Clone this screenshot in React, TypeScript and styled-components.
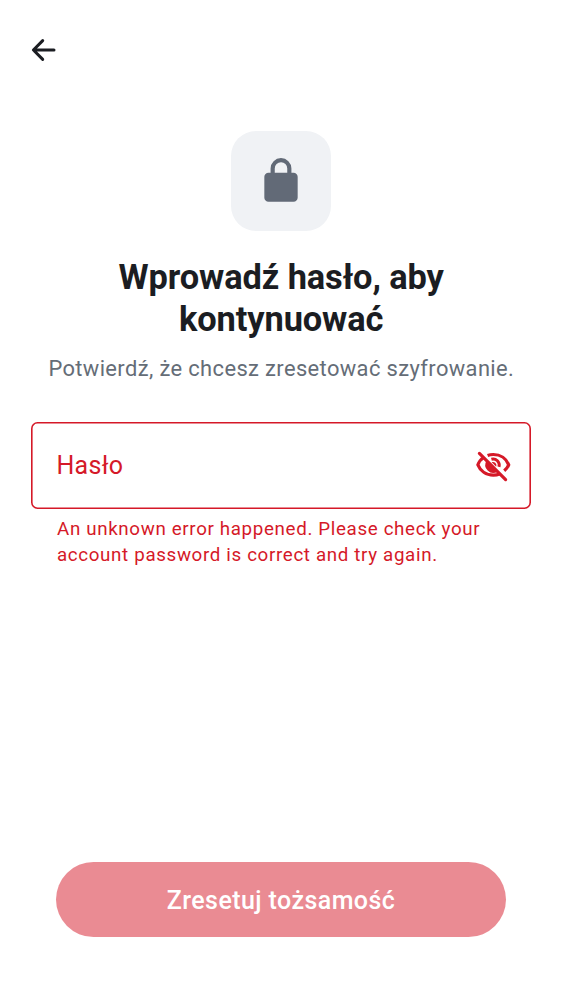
import React from "react";
import styled, { createGlobalStyle } from "styled-components";

const Global = createGlobalStyle`
  * { box-sizing: border-box; }
  body { margin: 0; background: #fff; font-family: Roboto, "Liberation Sans", sans-serif; }
`;

const Screen = styled.main`
  display: flex;
  flex-direction: column;
  height: 1000px;
  width: 562px;
  overflow: hidden;
  background: #fff;
`;

const TopBar = styled.header`
  display: flex;
  align-items: center;
  height: 100px;
  padding-left: 25px;
`;

const IconButton = styled.button`
  display: flex;
  padding: 0;
  border: 0;
  background: none;
  color: inherit;
`;

const Header = styled.section`
  display: flex;
  flex-direction: column;
  align-items: center;
  padding-top: 31px;
`;

const IconTile = styled.div`
  display: flex;
  align-items: center;
  justify-content: center;
  width: 100px;
  height: 100px;
  border-radius: 25px;
  background: #f0f2f5;
`;

const Title = styled.h1`
  margin: 25px 0 0;
  padding-left: 0.4px;
  font-size: 34.4px;
  line-height: 42.2px;
  letter-spacing: -0.1px;
  font-weight: 700;
  color: #1b1d22;
  text-align: center;
`;

const Subtitle = styled.p`
  margin: 13px 0 0;
  padding-left: 0.6px;
  font-size: 21.9px;
  line-height: 31px;
  letter-spacing: 0.38px;
  color: #656d77;
  white-space: nowrap;
`;

const Field = styled.div`
  display: flex;
  align-items: center;
  justify-content: space-between;
  height: 87.5px;
  margin: 37.3px 31px 0;
  padding: 0 19px 0 25.4px;
  box-shadow: inset 0 0 0 1.6px #d51928;
  border-radius: 6.5px;
  color: #d51928;
`;

const Label = styled.span`
  font-size: 25px;
  letter-spacing: 0.3px;
`;

const ErrorText = styled.p`
  margin: 6.8px 57px 0;
  font-size: 18.75px;
  line-height: 26.4px;
  letter-spacing: 0.65px;
  color: #d51928;
  white-space: nowrap;
`;

const Footer = styled.footer`
  margin-top: auto;
  padding: 0 56px 63px;
`;

const SubmitButton = styled.button`
  display: block;
  width: 100%;
  height: 75px;
  padding: 2px 0 0;
  border: 0;
  border-radius: 38px;
  background: #ea8b93;
  color: #fff;
  font-family: inherit;
  font-size: 25px;
  font-weight: 500;
  letter-spacing: 0.42px;
`;

export default function App() {
  return (
    <Screen>
      <Global />
      <TopBar>
        <IconButton aria-label="Wstecz">
          <svg width="38" height="38" viewBox="0 0 38 38" fill="none" stroke="#1b1d22" strokeWidth="3" strokeLinecap="round" strokeLinejoin="round">
            <path d="M29 19H8.600M17.700 9.600 8.400 19l9.300 9.400" />
          </svg>
        </IconButton>
      </TopBar>
      <Header>
        <IconTile>
          <svg width="50" height="50" viewBox="0 0 24 24" fill="#626a77">
            <path fillRule="evenodd" d="M6 22q-.825 0-1.412-.587A1.93 1.93 0 0 1 4 20V10q0-.825.588-1.412A1.93 1.93 0 0 1 6 8h1V6q0-2.075 1.463-3.537Q9.926 1 12 1t3.537 1.463T17 6v2h1q.825 0 1.413.588Q20 9.175 20 10v10q0 .824-.587 1.413A1.93 1.93 0 0 1 18 22zM9 8h6V6q0-1.250-.875-2.125A2.900 2.900 0 0 0 12 3q-1.250 0-2.125.875A2.900 2.900 0 0 0 9 6z" />
          </svg>
        </IconTile>
        <Title>Wprowadź hasło, aby<br />kontynuować</Title>
        <Subtitle>Potwierdź, że chcesz zresetować szyfrowanie.</Subtitle>
      </Header>
      <Field>
        <Label>Hasło</Label>
        <IconButton aria-label="Pokaż hasło">
          <svg width="38" height="38" viewBox="0 -0.8 38 38" fill="none" stroke="currentColor" strokeWidth="3.2">
            <path d="M13.600 8.700C15.400 8 17.200 7.700 19.300 7.700c7.200 0 13 4.100 15.400 10.300-.9 2.300-2.300 4.200-4.500 6M9.600 10.700C7 12.400 5 14.900 3.900 18c2.400 6.100 8.200 10.300 15.400 10.300 2.200 0 4.300-.3 6.100-1.100" />
            <path d="M17.400 12.400A6.200 6.200 0 0 1 25 20" strokeWidth="3" />
            <path d="M12.500 13.900 23.500 24.900A8 8 0 0 1 12.500 13.900Z" fill="currentColor" stroke="none" />
            <path d="M17.500 15.300Q20 14.600 21.500 16.200 23 18 22.200 20Z" fill="currentColor" stroke="none" />
            <path d="M5.400 6.600 31.600 32.800" strokeLinecap="round" />
          </svg>
        </IconButton>
      </Field>
      <ErrorText>An unknown error happened. Please check your<br />account password is correct and try again.</ErrorText>
      <Footer>
        <SubmitButton>Zresetuj tożsamość</SubmitButton>
      </Footer>
    </Screen>
  );
}
